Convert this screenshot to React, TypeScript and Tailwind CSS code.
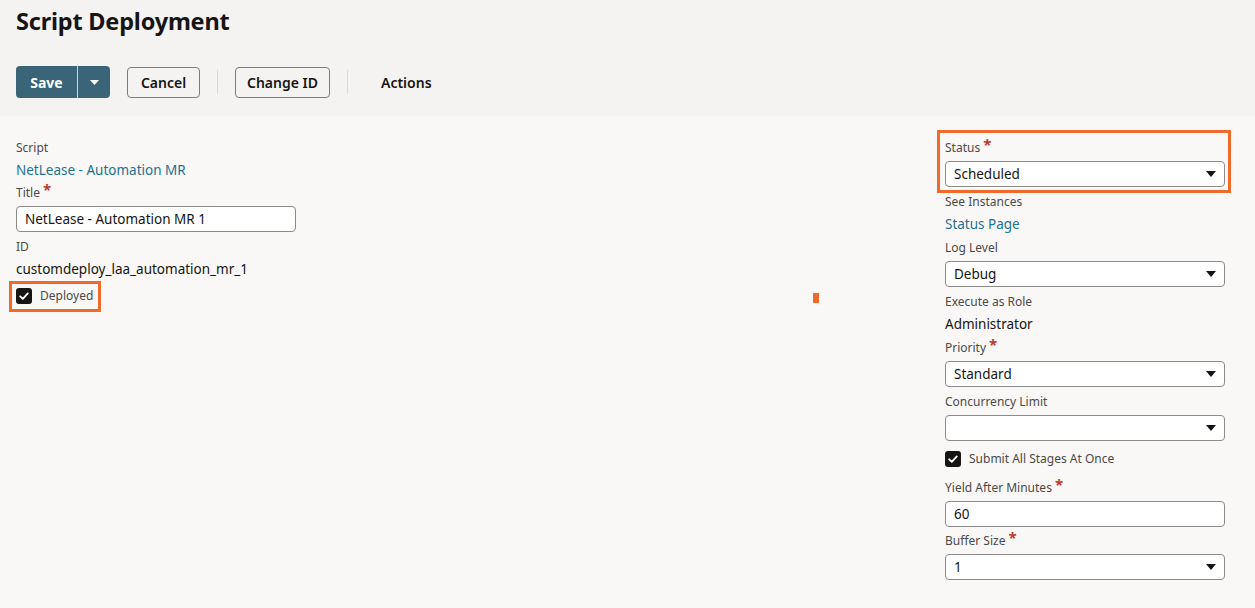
import React from "react";

const FONT = { fontFamily: '"Noto Sans", "Open Sans", Arial, sans-serif' };

function Caret() {
  return (
    <svg width="10" height="6" viewBox="0 0 10 6" className="shrink-0">
      <path d="M0 0 H10 L5 6 Z" fill="#161513" />
    </svg>
  );
}

function Check() {
  return (
    <span className="flex h-4 w-4 shrink-0 items-center justify-center rounded-[3px] bg-[#161513]">
      <svg width="12" height="12" viewBox="0 0 12 12">
        <path d="M2.2 6.3 L4.8 8.8 L9.8 3.4" fill="none" stroke="#fff" strokeWidth="1.8" strokeLinecap="round" strokeLinejoin="round" />
      </svg>
    </span>
  );
}

function Label({ text, required }: { text: string; required?: boolean }) {
  return (
    <div className="flex h-[18px] items-center text-[12px] text-[#4b4a48]">
      {text}
      {required && <span className="relative -top-[4px] ml-[3px] text-[15px] font-bold text-[#c0392b]">*</span>}
    </div>
  );
}

function Select({ value }: { value?: string }) {
  return (
    <div className="mt-1 flex h-[26px] items-center justify-between rounded-[4px] border border-[#8c8b89] bg-white pl-2 pr-[8px] text-[13.5px] text-[#161513]">
      <span>{value}</span>
      <Caret />
    </div>
  );
}

function TextInput({ value }: { value: string }) {
  return (
    <div className="mt-1 flex h-[26px] items-center rounded-[4px] border border-[#8c8b89] bg-white px-2 text-[13.5px] text-[#161513]">
      {value}
    </div>
  );
}

function ReadOnly({ label, value, link }: { label: string; value: string; link?: boolean }) {
  return (
    <div>
      <Label text={label} />
      <div className={`mt-[2px] flex h-[22px] items-center text-[13.5px] ${link ? "text-[#1f7191]" : "text-[#161513]"}`}>
        {value}
      </div>
    </div>
  );
}

export default function App() {
  return (
    <div style={FONT} className="relative min-h-[608px] w-full bg-[#f9f8f6] text-[#161513]">
      {/* header */}
      <div className="h-[116px] bg-[#f4f3f1] px-4 pt-[4px]">
        <h1 className="text-[23.5px] font-bold leading-[34px] tracking-[-0.2px]">Script Deployment</h1>
        <div className="mt-[28px] flex items-center gap-[17px]">
          <div className="flex h-[32px] overflow-hidden rounded-[4px] bg-[#3a6478] text-white">
            <button className="w-[61px] text-[14px] font-bold">Save</button>
            <div className="w-px bg-[#c9d4da]" />
            <button className="flex w-[32px] items-center justify-center">
              <svg width="9" height="5" viewBox="0 0 9 5">
                <path d="M0 0 H9 L4.5 5 Z" fill="#fff" />
              </svg>
            </button>
          </div>
          <button className="h-[31px] w-[73px] rounded-[4px] border border-[#7d7c7a] text-[14px] font-semibold">Cancel</button>
          <div className="h-[24px] w-px bg-[#dcdad6]" />
          <button className="h-[31px] w-[95px] rounded-[4px] border border-[#7d7c7a] text-[14px] font-semibold">Change ID</button>
          <div className="h-[24px] w-px bg-[#dcdad6]" />
          <button className="px-[16px] text-[14px] font-semibold">Actions</button>
        </div>
      </div>

      {/* body */}
      <div className="flex justify-between pl-4 pr-[30px] pt-[23px]">
        <div className="w-[280px]">
          <ReadOnly label="Script" value="NetLease - Automation MR" link />
          <div className="mt-[3px]">
            <Label text="Title" required />
            <TextInput value="NetLease - Automation MR 1" />
          </div>
          <div className="mt-[6px]">
            <ReadOnly label="ID" value="customdeploy_laa_automation_mr_1" />
          </div>
          <div className="relative mt-[8px] flex h-[16px] items-center gap-2">
            <div className="absolute -bottom-[8px] -left-[7px] -top-[7px] w-[92px] border-[3px] border-[#f06a2c]" />
            <Check />
            <span className="text-[12px] text-[#4b4a48]">Deployed</span>
          </div>
        </div>

        <div className="w-[280px]">
          <div className="relative">
            <div className="absolute -bottom-[6px] -left-[8px] -right-[6px] -top-[9px] border-[3px] border-[#f06a2c]" />
            <Label text="Status" required />
            <Select value="Scheduled" />
          </div>
          <div className="mt-[6px]">
            <ReadOnly label="See Instances" value="Status Page" link />
          </div>
          <div className="mt-[4px]">
            <Label text="Log Level" />
            <Select value="Debug" />
          </div>
          <div className="mt-[6px]">
            <ReadOnly label="Execute as Role" value="Administrator" />
          </div>
          <div className="mt-[4px]">
            <Label text="Priority" required />
            <Select value="Standard" />
          </div>
          <div className="mt-[6px]">
            <Label text="Concurrency Limit" />
            <Select />
          </div>
          <div className="mt-[10px] flex h-[16px] items-center gap-2">
            <Check />
            <span className="text-[12px] text-[#4b4a48]">Submit All Stages At Once</span>
          </div>
          <div className="mt-[12px]">
            <Label text="Yield After Minutes" required />
            <TextInput value="60" />
          </div>
          <div className="mt-[5px]">
            <Label text="Buffer Size" required />
            <Select value="1" />
          </div>
        </div>
      </div>

      {/* annotation marker */}
      <div className="absolute left-[813px] top-[293px] h-[10px] w-[6px] bg-[#f06a2c]" />
    </div>
  );
}
